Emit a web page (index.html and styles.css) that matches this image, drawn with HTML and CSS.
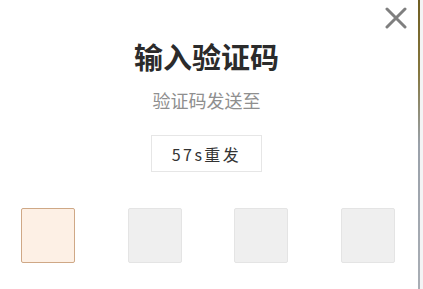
FILE: index.html
```html
<!DOCTYPE html>
<html lang="zh">
<head>
<meta charset="utf-8">
<link rel="stylesheet" href="styles.css">
</head>
<body>
<div class="page">
  <div class="modal">
    <button class="close" aria-label="关闭">
      <svg width="22" height="22" viewBox="0 0 22 22"><path d="M2 2 L20 20 M20 2 L2 20" stroke="#7f7f7f" stroke-width="3" stroke-linecap="round" fill="none"/></svg>
    </button>
    <div class="head">
      <h1 class="title">输入验证码</h1>
      <p class="sub">验证码发送至</p>
      <div class="resend">57s重发</div>
    </div>
    <div class="codes">
      <div class="cell active"></div>
      <div class="cell"></div>
      <div class="cell"></div>
      <div class="cell"></div>
    </div>
  </div>
  <div class="edge"></div>
  <div class="rest"></div>
</div>
</body>
</html>
```

FILE: styles.css
```css
html, body {
  margin: 0;
  padding: 0;
  width: 423px;
  height: 289px;
  overflow: hidden;
  background: #fff;
  font-family: "Noto Sans CJK SC", "Noto Sans", sans-serif;
}
.page {
  display: flex;
  height: 289px;
}
.modal {
  position: relative;
  width: 418px;
  background: #fff;
}
.edge {
  width: 2px;
  background: linear-gradient(#6f5e22 0%, #85773f 25%, #9aa1aa 50%, #a9aeb5 100%);
}
.rest {
  flex: 1;
  background: #f3f4f5;
}
.close {
  position: absolute;
  top: 7px;
  left: 385px;
  width: 22px;
  height: 22px;
  padding: 0;
  border: 0;
  background: none;
}
.head {
  display: flex;
  flex-direction: column;
  align-items: center;
  padding-top: 40px;
  padding-right: 5px;
}
.title {
  margin: 0;
  font-size: 29px;
  line-height: 32px;
  font-weight: 700;
  color: #2b2b2b;
}
.sub {
  margin: 18px 0 0;
  font-size: 18px;
  line-height: 20px;
  color: #8f8f8f;
}
.resend {
  margin-top: 25px;
  box-sizing: border-box;
  width: 111px;
  height: 37px;
  border: 1px solid #e6e6e6;
  display: flex;
  align-items: center;
  justify-content: center;
  font-size: 16px;
  letter-spacing: 2.5px;
  color: #333;
}
.codes {
  display: flex;
  gap: 52.5px;
  padding-left: 21px;
  margin-top: 36px;
}
.cell {
  box-sizing: border-box;
  width: 54px;
  height: 55px;
  border: 1px solid #e4e4e4;
  border-radius: 2px;
  background: #efefef;
}
.cell.active {
  border-color: #cfa886;
  background: #fdf0e5;
}
```
